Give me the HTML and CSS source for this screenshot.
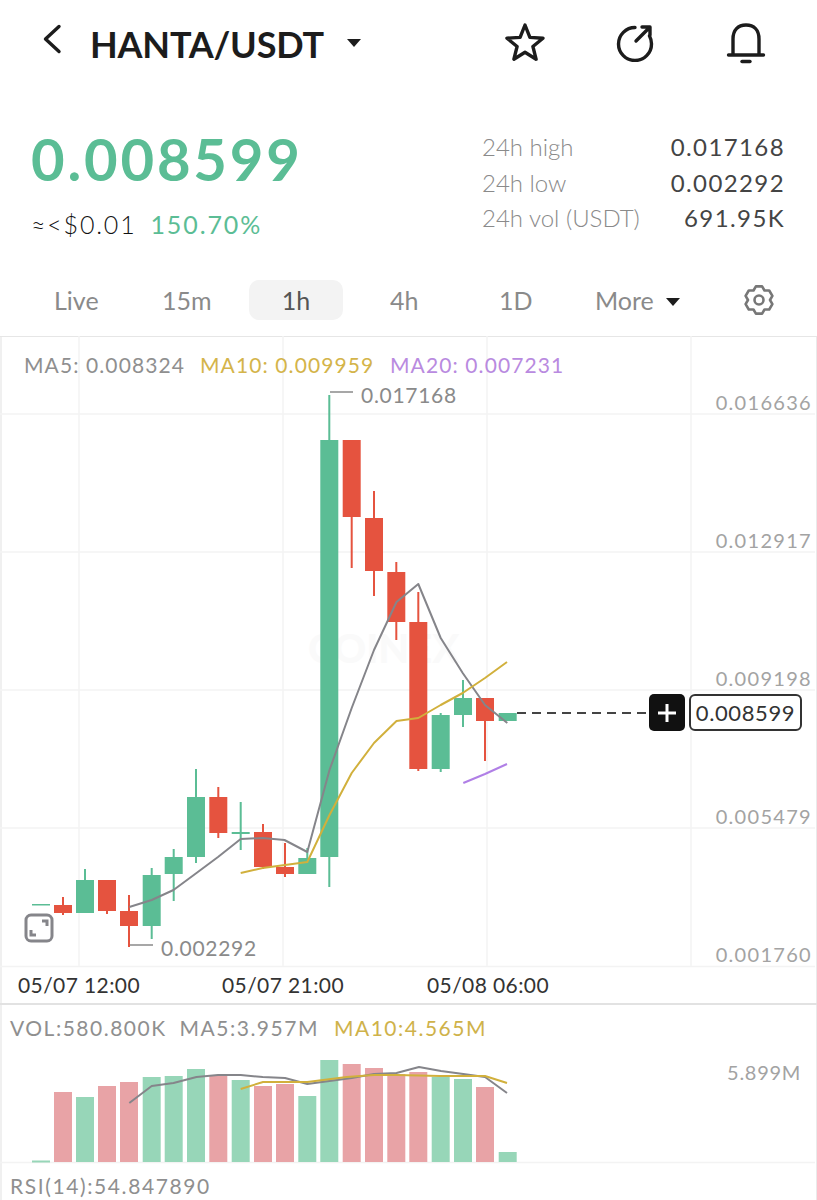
FILE: index.html
```html
<!DOCTYPE html>
<html lang="en">
<head>
  <meta charset="UTF-8" />
  <meta name="viewport" content="width=device-width, initial-scale=1.0" />
  <title>HANTA/USDT</title>
  <link rel="stylesheet" href="styles.css">
</head>
<body>
  <div class="topbar">
    <svg class="back" width="20" height="30" viewBox="0 0 20 30"><polyline points="16,2.5 2.5,15 16,27.5" /></svg>
    <h1>HANTA/USDT</h1>
    <span class="caret caret-title"></span>
    <div class="top-icons">
      <svg width="42" height="42" viewBox="-21 -22 42 42"><polygon points="0,-19 4.9,-6.6 18,-5.8 7.9,2.5 11.1,15.2 0,8.2 -11.1,15.2 -7.9,2.5 -18,-5.8 -4.9,-6.6" /></svg>
      <svg width="38" height="38" viewBox="0 0 38 38"><path d="M19 3.5 A16.5 16.5 0 1 0 35.5 20 A16 16 0 0 0 33.5 12" /><path d="M20 17 L33 4 M26 3 H34 V11" /></svg>
      <svg class="bell" width="40" height="42" viewBox="0 0 40 42"><path d="M7 32 V17 C7 8 12 3 20 3 C28 3 33 8 33 17 V32" /><path d="M2.5 33 H37.5" /><path d="M16 39.5 H24" /></svg>
    </div>
  </div>

  <div class="ticker">
    <div class="ticker-main">
      <div class="price">0.008599</div>
      <div class="sub"><span class="approx">≈&lt;$0.01</span><span class="change">150.70%</span></div>
    </div>
    <div class="stats">
      <div class="stat"><span>24h high</span><b>0.017168</b></div>
      <div class="stat"><span>24h low</span><b>0.002292</b></div>
      <div class="stat"><span>24h vol (USDT)</span><b>691.95K</b></div>
    </div>
  </div>

  <div class="tabs">
    <span class="tab tab-live">Live</span>
    <span class="tab tab-15m">15m</span>
    <span class="tab tab-1h">1h</span>
    <span class="tab tab-4h">4h</span>
    <span class="tab tab-1d">1D</span>
    <span class="tab tab-more">More<span class="caret caret-more"></span></span>
    <svg class="gear" width="32" height="32" viewBox="-16 -16 32 32">
      <polygon points="-3.1,-13.6 3.1,-13.6 5.5,-9.5 10.2,-9.5 13.4,-4.1 11,0 13.4,4.1 10.2,9.5 5.5,9.5 3.1,13.6 -3.1,13.6 -5.5,9.5 -10.2,9.5 -13.4,4.1 -11,0 -13.4,-4.1 -10.2,-9.5 -5.5,-9.5" />
      <circle r="4.5" />
    </svg>
  </div>

  <div class="chart">
    <svg class="kline" width="817" height="632" viewBox="0 336 817 632">
      <!-- grid -->
      <g class="grid">
        <path d="M0 414 H815 M0 552 H815 M0 690 H815 M0 828 H815 M0 966.5 H815" />
        <path d="M79 336 V966 M283 336 V966 M487 336 V966 M691 336 V966" />
      </g>
      <text class="watermark" x="308" y="663">COINEX</text>

      <text class="legend" x="24" y="373">MA5: 0.008324</text>
      <text class="legend ma10" x="200" y="373">MA10: 0.009959</text>
      <text class="legend ma20" x="390" y="373">MA20: 0.007231</text>

      <g class="axis">
        <text x="812" y="410">0.016636</text>
        <text x="812" y="548">0.012917</text>
        <text x="812" y="686">0.009198</text>
        <text x="812" y="824">0.005479</text>
        <text x="812" y="962">0.001760</text>
      </g>

      <!-- candles: wick then body -->
      <g class="up">
        <rect x="32" y="904" width="18" height="1.5" />
        <rect x="84" y="869" width="2" height="44" /><rect x="76" y="880" width="18" height="33" />
        <rect x="150.7" y="868" width="2" height="71" /><rect x="142.7" y="875" width="18" height="51" />
        <rect x="172.7" y="849" width="2" height="52" /><rect x="164.7" y="857" width="18" height="17" />
        <rect x="195" y="769" width="2" height="94" /><rect x="187" y="797" width="18" height="60" />
        <rect x="239.7" y="802" width="2" height="48" /><rect x="231.7" y="832" width="18" height="2" />
        <rect x="306.3" y="848" width="2" height="26" /><rect x="298.3" y="858" width="18" height="16" />
        <rect x="328.3" y="395" width="2" height="492" /><rect x="320.3" y="440" width="18" height="417" />
        <rect x="439.7" y="713" width="2" height="59" /><rect x="431.7" y="715" width="18" height="54" />
        <rect x="462" y="680" width="2" height="47" /><rect x="454" y="698" width="18" height="17" />
        <rect x="498.7" y="713" width="18" height="8" />
      </g>
      <g class="down">
        <rect x="62" y="897" width="2" height="18" /><rect x="54" y="905" width="18" height="8" />
        <rect x="106" y="880" width="2" height="34" /><rect x="98" y="880" width="18" height="31" />
        <rect x="128" y="895" width="2" height="52" /><rect x="120" y="911" width="18" height="15" />
        <rect x="217.3" y="787" width="2" height="51" /><rect x="209.3" y="797" width="18" height="36" />
        <rect x="262" y="824" width="2" height="45" /><rect x="254" y="832" width="18" height="35" />
        <rect x="284" y="843" width="2" height="34" /><rect x="276" y="867" width="18" height="7" />
        <rect x="350.7" y="440" width="2" height="128" /><rect x="342.7" y="440" width="18" height="77" />
        <rect x="373" y="491" width="2" height="105" /><rect x="365" y="518" width="18" height="53" />
        <rect x="395.3" y="562" width="2" height="78" /><rect x="387.3" y="572" width="18" height="50" />
        <rect x="417.3" y="592" width="2" height="179" /><rect x="409.3" y="622" width="18" height="147" />
        <rect x="484" y="698" width="2" height="63" /><rect x="476" y="698" width="18" height="23" />
      </g>

      <polyline class="line line-ma5" points="129.3,907 151.7,900 173.5,890 196.5,873 218,857 240.7,839 262.7,838 284.5,840 307.3,852 329.5,770 351.7,708 374,650 396.5,602 418.3,584 440.7,638 462.7,673 485,705 507.3,723" />
      <polyline class="line line-ma10" points="240.7,873 262.7,868 285,865 307.3,862 329.5,815 351.7,773 374,743 396.5,721 418.3,718 440.7,705 462.7,693 485,678 507,662" />
      <polyline class="line line-ma20" points="463.3,783 485,774 507,764" />

      <!-- high / low marks -->
      <path class="mark" d="M330 392 H353 M130 945 H153" />
      <text class="mark-text" x="361" y="403">0.017168</text>
      <text class="mark-text" x="161" y="956">0.002292</text>

      <path class="last-line" d="M517 713 H649" />
    </svg>

    <svg class="expand" width="30" height="30" viewBox="0 0 30 30">
      <rect x="2" y="2" width="26" height="26" rx="5" />
      <path d="M18 8 H23 V13 M7 17 V22 H12" />
    </svg>
    <div class="last">
      <span class="plus"><svg width="20" height="20" viewBox="0 0 20 20"><path d="M10 1 V19 M1 10 H19" /></svg></span>
      <span class="last-price">0.008599</span>
    </div>
  </div>

  <div class="dates">
    <span>05/07 12:00</span>
    <span>05/07 21:00</span>
    <span>05/08 06:00</span>
  </div>

  <div class="volume">
    <div class="vol-legend">
      <span>VOL:580.800K</span><span>MA5:3.957M</span><span class="ma10">MA10:4.565M</span>
    </div>
    <svg class="vol-chart" width="817" height="124" viewBox="0 1042 817 124">
      <path class="grid" d="M0 1162.5 H815" />
      <g class="vol-up">
        <rect x="32" y="1160.5" width="18" height="2" />
        <rect x="76" y="1097" width="18" height="65" />
        <rect x="142.7" y="1077" width="18" height="85" />
        <rect x="164.7" y="1076" width="18" height="86" />
        <rect x="187" y="1069" width="18" height="93" />
        <rect x="231.7" y="1080" width="18" height="82" />
        <rect x="298.3" y="1096" width="18" height="66" />
        <rect x="320.3" y="1060" width="18" height="102" />
        <rect x="431.7" y="1077" width="18" height="85" />
        <rect x="454" y="1079" width="18" height="83" />
        <rect x="498.7" y="1152" width="18" height="10" />
      </g>
      <g class="vol-down">
        <rect x="54" y="1092" width="18" height="70" />
        <rect x="98" y="1086" width="18" height="76" />
        <rect x="120" y="1082" width="18" height="80" />
        <rect x="209.3" y="1075" width="18" height="87" />
        <rect x="254" y="1086" width="18" height="76" />
        <rect x="276" y="1084" width="18" height="78" />
        <rect x="342.7" y="1064" width="18" height="98" />
        <rect x="365" y="1068" width="18" height="94" />
        <rect x="387.3" y="1074" width="18" height="88" />
        <rect x="409.3" y="1072" width="18" height="90" />
        <rect x="476" y="1087" width="18" height="75" />
      </g>
      <polyline class="line line-ma5" points="129.3,1103 151.7,1086 173.5,1083 196.5,1077 218,1075 240.7,1075 262.7,1077 285,1078 307.3,1084 329.5,1081 351.7,1078 374,1074 396.5,1073 419,1067 441,1071 463.3,1074 485,1077 507,1093" />
      <polyline class="line line-ma10" points="240.7,1089 263,1082 285,1082 307.3,1082 346.7,1077 374,1075 396.5,1075 440,1076 485,1076 507,1083" />
      <text class="axis-text" x="801" y="1080">5.899M</text>
    </svg>
    <div class="rsi">RSI(14):54.847890</div>
  </div>
</body>
</html>
```

FILE: styles.css
```css
* {
  box-sizing: border-box;
}
body {
  margin: 0;
  width: 817px;
  height: 1200px;
  overflow: hidden;
  background: #fff;
  color: #222;
  font-family: "Lato", "Liberation Sans", sans-serif;
}

/* top bar */
.topbar {
  display: flex;
  align-items: center;
  height: 88px;
  padding-left: 43px;
}
.topbar svg {
  fill: none;
  stroke: #1c1c1c;
  stroke-width: 3.4;
  stroke-linecap: round;
  stroke-linejoin: round;
}
.topbar .back {
  margin-top: -10px;
}
h1 {
  margin: 0 0 0 27px;
  font-size: 36px;
  font-weight: 700;
  letter-spacing: -0.2px;
  color: #1c1c1c;
}
.caret {
  display: inline-block;
  border-top: 8px solid #1c1c1c;
  border-left: 7px solid transparent;
  border-right: 7px solid transparent;
}
.caret-title {
  margin-left: 23px;
  margin-top: -2px;
}
.top-icons {
  display: flex;
  align-items: center;
  gap: 70px;
  margin-left: 143px;
  margin-top: -2px;
}
.top-icons .bell {
  margin-left: 2px;
}

/* price block */
.ticker {
  display: flex;
  justify-content: space-between;
  height: 190px;
  padding: 42px 32px 0 31px;
}
.price {
  font-size: 58px;
  line-height: 58px;
  font-weight: 700;
  letter-spacing: 2.8px;
  color: #5bbd95;
}
.sub {
  display: flex;
  gap: 14px;
  margin-top: 20px;
  font-size: 25px;
  line-height: 32px;
  letter-spacing: 1.5px;
}
.approx {
  font-weight: 300;
  color: #111;
  letter-spacing: 1.8px;
}
.change {
  letter-spacing: 1.9px;
  color: #5bbd95;
}
.stats {
  width: 303px;
  margin-top: -1px;
  font-size: 24px;
  font-weight: 300;
  line-height: 35.5px;
  color: #8a8a8a;
}
.stat {
  display: flex;
  justify-content: space-between;
}
.stat b {
  font-weight: 400;
  color: #444;
  letter-spacing: 1.4px;
}

/* interval tabs */
.tabs {
  display: flex;
  align-items: flex-start;
  height: 58px;
  padding: 2px 0 0 54px;
  font-size: 25px;
  color: #8a8a8a;
}
.tab {
  line-height: 40px;
}
.tab-live { width: 108px; }
.tab-15m { width: 87px; }
.tab-1h {
  width: 94px;
  margin-right: 47px;
  text-align: center;
  background: #f3f3f3;
  border-radius: 10px;
  color: #555;
}
.tab-4h { width: 109px; }
.tab-1d { width: 96px; }
.tab-more {
  width: 148px;
  white-space: nowrap;
}
.caret-more {
  margin-left: 12px;
  vertical-align: 4px;
}
.gear {
  margin-top: 4px;
  fill: none;
  stroke: #777;
  stroke-width: 2.6;
  stroke-linejoin: round;
}

/* candle chart */
.chart {
  position: relative;
  height: 632px;
  border-top: 1px solid #e6e6e6;
}
.chart,
.dates,
.volume {
  box-shadow: inset 2px 0 #f0f0f0, inset -1px 0 #eaeaea;
}
.kline {
  display: block;
  margin-top: -1px;
}
.grid path,
path.grid {
  fill: none;
  stroke: #f3f3f3;
  stroke-width: 1.5;
}
.watermark {
  font-size: 40px;
  font-weight: 900;
  fill: #fafafa;
}
.legend {
  font-size: 21px;
  letter-spacing: 1.1px;
  fill: #8f8f8f;
}
.legend.ma10 {
  fill: #d4b44a;
}
.legend.ma20 {
  fill: #b98ae0;
}
.axis text {
  font-size: 20px;
  letter-spacing: 1.3px;
  fill: #a3a3a3;
  text-anchor: end;
}
.axis-text {
  font-size: 20px;
  letter-spacing: 0.7px;
  fill: #a3a3a3;
  text-anchor: end;
}
.up {
  fill: #5bbd95;
}
.down {
  fill: #e5533f;
}
.line {
  fill: none;
  stroke-width: 2;
  stroke-linejoin: round;
}
.line-ma5 {
  stroke: #85858a;
}
.line-ma10 {
  stroke: #d1b03c;
}
.line-ma20 {
  stroke: #b07fe6;
}
.mark {
  fill: none;
  stroke: #8a8a8a;
  stroke-width: 1.5;
}
.mark-text {
  font-size: 21px;
  letter-spacing: 0.7px;
  fill: #8a8a8a;
}
.last-line {
  stroke: #444;
  stroke-width: 2;
  stroke-dasharray: 9 6;
}
.expand {
  position: absolute;
  left: 24px;
  top: 576px;
  fill: none;
  stroke: #85858a;
  stroke-width: 3;
}
.last {
  position: absolute;
  left: 649px;
  top: 357px;
  display: flex;
  gap: 4px;
}
.plus {
  display: flex;
  align-items: center;
  justify-content: center;
  width: 36px;
  height: 37px;
  background: #111;
  border-radius: 5px;
}
.plus svg {
  stroke: #fff;
  stroke-width: 3;
}
.last-price {
  width: 113px;
  height: 37px;
  border: 2px solid #333;
  border-radius: 6px;
  background: #fff;
  text-align: center;
  font-size: 22px;
  line-height: 34px;
  letter-spacing: 0.6px;
  color: #333;
}

/* time axis */
.dates {
  display: grid;
  grid-template-columns: 204px 205px auto;
  height: 37px;
  padding-left: 18px;
  border-bottom: 2px solid #e2e2e2;
  font-size: 21px;
  line-height: 33px;
  letter-spacing: 0.4px;
  color: #333;
}

/* volume */
.volume {
  position: relative;
}
.vol-legend {
  display: flex;
  gap: 13px;
  height: 37px;
  padding-left: 10px;
  font-size: 21px;
  line-height: 46px;
  letter-spacing: 1.5px;
  color: #8f8f8f;
}
.vol-legend .ma10 {
  margin-left: 2px;
  color: #cfb24a;
}
.vol-chart {
  display: block;
}
.vol-up {
  fill: #97d6b8;
}
.vol-down {
  fill: #e8a3a6;
}
.rsi {
  padding-left: 10px;
  font-size: 21px;
  line-height: 40px;
  letter-spacing: 1.6px;
  color: #8f8f8f;
}
```
